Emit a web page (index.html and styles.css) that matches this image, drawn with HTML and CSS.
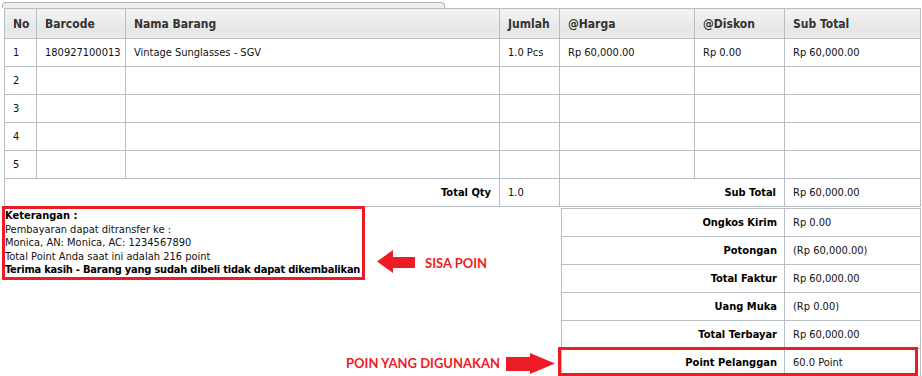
FILE: index.html
```html
<!DOCTYPE html>
<html>
<head>
<meta charset="utf-8">
<link rel="stylesheet" href="styles.css">
</head>
<body>
<div class="tab"></div>
<table class="items">
  <colgroup>
    <col class="c-no"><col class="c-bc"><col class="c-nm"><col class="c-qty"><col class="c-hg"><col class="c-dk"><col class="c-st">
  </colgroup>
  <thead>
    <tr><th>No</th><th>Barcode</th><th>Nama Barang</th><th>Jumlah</th><th>@Harga</th><th>@Diskon</th><th>Sub Total</th></tr>
  </thead>
  <tbody>
    <tr><td>1</td><td>180927100013</td><td>Vintage Sunglasses - SGV</td><td>1.0 Pcs</td><td>Rp 60,000.00</td><td>Rp 0.00</td><td>Rp 60,000.00</td></tr>
    <tr><td>2</td><td></td><td></td><td></td><td></td><td></td><td></td></tr>
    <tr><td>3</td><td></td><td></td><td></td><td></td><td></td><td></td></tr>
    <tr><td>4</td><td></td><td></td><td></td><td></td><td></td><td></td></tr>
    <tr><td>5</td><td></td><td></td><td></td><td></td><td></td><td></td></tr>
    <tr><td colspan="3" class="lbl">Total Qty</td><td>1.0</td><td colspan="2" class="lbl">Sub Total</td><td>Rp 60,000.00</td></tr>
  </tbody>
</table>
<div class="bottom">
  <div class="notes-col">
    <div class="notes-row">
      <div class="notes">
        <b>Keterangan :</b><br>
        Pembayaran dapat ditransfer ke :<br>
        Monica, AN: Monica, AC: 1234567890<br>
        Total Point Anda saat ini adalah 216 point<br>
        <b class="thanks">Terima kasih - Barang yang sudah dibeli tidak dapat dikembalikan</b>
      </div>
      <svg class="arrow-left" width="38" height="23" viewBox="0 0 38 23"><polygon points="0,11.5 16,0 16,7 38,7 38,18 16,18 16,23" fill="#ed1c24"/></svg>
      <span class="callout sisa">SISA POIN</span>
    </div>
    <div class="used-row">
      <span class="callout">POIN YANG DIGUNAKAN</span>
      <svg class="arrow-right" width="49" height="21" viewBox="0 0 49 21"><polygon points="49,10.5 24,0 24,4 0,4 0,18 24,18 24,21" fill="#ed1c24"/></svg>
    </div>
  </div>
  <div class="summary-wrap">
    <table class="summary">
      <colgroup><col class="s-lbl"><col class="s-val"></colgroup>
      <tr><td class="lbl">Ongkos Kirim</td><td>Rp 0.00</td></tr>
      <tr><td class="lbl">Potongan</td><td>(Rp 60,000.00)</td></tr>
      <tr><td class="lbl">Total Faktur</td><td>Rp 60,000.00</td></tr>
      <tr><td class="lbl">Uang Muka</td><td>(Rp 0.00)</td></tr>
      <tr><td class="lbl">Total Terbayar</td><td>Rp 60,000.00</td></tr>
      <tr><td class="lbl">Point Pelanggan</td><td>60.0 Point</td></tr>
    </table>
    <div class="mark"></div>
  </div>
</div>
</body>
</html>
```

FILE: styles.css
```css
html, body {
  margin: 0;
  padding: 0;
  background: #fff;
}
body {
  font-family: "DejaVu Sans Condensed", "DejaVu Sans", sans-serif;
  font-stretch: condensed;
  font-size: 11px;
  color: #111;
  overflow: hidden;
}
.tab {
  box-sizing: border-box;
  margin: 2px 0 0 2px;
  width: 443px;
  height: 6px;
  border: 1px solid #b4b4b4;
  border-bottom: none;
  border-radius: 4px 4px 0 0;
  background: #efefef;
}
table {
  border-collapse: collapse;
  table-layout: fixed;
}
.items {
  margin-left: 4px;
  width: 916px;
}
.c-no { width: 32px; }
.c-bc { width: 89px; }
.c-nm { width: 374px; }
.c-qty { width: 60px; }
.c-hg { width: 135px; }
.c-dk { width: 90px; }
.c-st { width: 136px; }
th, td {
  border: 1px solid #b6bdc4;
  padding: 0 8px;
  text-align: left;
  vertical-align: middle;
  white-space: nowrap;
  overflow: hidden;
}
th {
  height: 29px;
  font-size: 12px;
  font-weight: bold;
  color: #333;
  background: linear-gradient(#f3f3f3, #e6e6e6 70%, #ececec);
}
td {
  height: 27px;
}
td.lbl {
  text-align: right;
  font-weight: bold;
  color: #000;
}
.bottom {
  display: flex;
  margin-left: 2px;
}
.notes-col {
  width: 556px;
  margin-top: -1px;
  display: flex;
  flex-direction: column;
}
.notes-row {
  display: flex;
  align-items: flex-start;
}
.notes {
  box-sizing: border-box;
  width: 363px;
  border: 3px solid #ed1c24;
  padding: 0;
  line-height: 13.6px;
  color: #111;
  white-space: nowrap;
  overflow: hidden;
}
.notes b { color: #000; }
.notes .thanks { letter-spacing: -0.22px; }
.arrow-left {
  display: block;
  margin: 44px 0 0 12px;
}
.callout {
  font-family: Lato, "Open Sans", sans-serif;
  font-stretch: normal;
  font-weight: bold;
  font-size: 13px;
  color: #ed1c24;
}
.sisa {
  margin: 49px 0 0 10px;
  line-height: 16px;
}
.used-row {
  margin-top: auto;
  height: 28px;
  display: flex;
  align-items: center;
  justify-content: flex-end;
  gap: 6px;
  padding-right: 3px;
}
.arrow-right { display: block; }
.summary-wrap {
  position: relative;
  margin: 1px 0 0 3px;
}
.summary {
  width: 359px;
}
.s-lbl { width: 223px; }
.s-val { width: 136px; }
.summary td { height: 27px; }
.summary td.lbl { padding-right: 7px; }
.mark {
  position: absolute;
  box-sizing: border-box;
  left: -3px;
  top: 139px;
  width: 360px;
  height: 29px;
  border: 3px solid #ed1c24;
}
```
